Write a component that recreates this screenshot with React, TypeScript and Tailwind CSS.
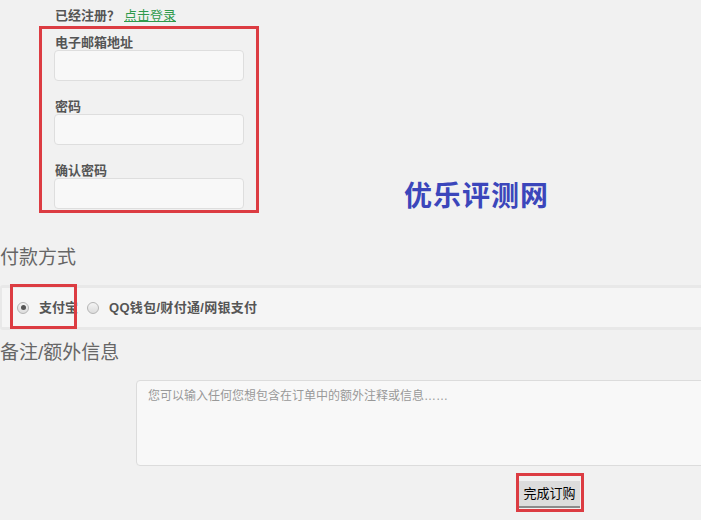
import React from 'react';

const font = "font-['Liberation_Sans','Noto_Sans_CJK_SC',sans-serif]";

function Field({ label, first }: { label: string; first?: boolean }) {
  return (
    <div className={first ? '' : 'mt-[19px]'}>
      <div className="pl-[1px] text-[13px] font-bold leading-[14px] text-[#555]">{label}</div>
      <div className="h-[31px] w-[190px] rounded-[4px] border border-[#dedede] bg-[#f8f8f8]" />
    </div>
  );
}

function Radio({ checked }: { checked?: boolean }) {
  return (
    <span className="flex h-[12px] w-[12px] items-center justify-center rounded-full border border-[#b5b5b5] bg-gradient-to-b from-[#f4f4f4] to-[#dcdcdc]">
      {checked && <span className="h-[5px] w-[5px] rounded-full bg-[#555]" />}
    </span>
  );
}

export default function App() {
  return (
    <div className={`relative h-[520px] w-[701px] overflow-hidden bg-[#f1f1f1] ${font}`}>
      <div className="flex h-[24px] items-start pl-[55px] pt-[8px] text-[13px] leading-[16px] text-[#555]">
        <span className="font-bold">已经注册？</span>
        <a href="#" className="ml-[4px] text-[#2f9a4c] underline">点击登录</a>
      </div>

      <div className="ml-[39px] mt-[2px] w-[220px] border-[3px] border-[#dc3c42] pb-[1px] pl-[12px] pt-[7px]">
        <Field label="电子邮箱地址" first />
        <Field label="密码" />
        <Field label="确认密码" />
      </div>

      <div className="absolute left-[404px] top-[179px] text-[28px] font-bold leading-[36px] tracking-[1px] text-[#3b46bb]">
        优乐评测网
      </div>

      <h3 className="mt-[31px] text-[19px] leading-[28px] text-[#666]">付款方式</h3>

      <div className="relative mt-[13px] flex h-[45px] items-center rounded-l-[3px] border-y-[3px] border-l-[2px] border-[#e8e8e8] bg-[#f5f5f5] pl-[15px] text-[13px] font-bold text-[#555]">
        <Radio checked />
        <span className="ml-[10px]">支付宝</span>
        <span className="ml-[9px]"><Radio /></span>
        <span className="ml-[10px] tracking-[0.3px]">QQ钱包/财付通/网银支付</span>
        <div className="absolute left-[8px] top-[-4px] h-[45px] w-[67px] border-[3px] border-[#dc3c42]" />
      </div>

      <h3 className="mt-[9px] text-[19px] leading-[28px] text-[#666]">备注/额外信息</h3>

      <div className="ml-[136px] mt-[13px] h-[86px] w-[600px] rounded-[4px] border border-[#dcdcdc] bg-[#f8f8f8] pl-[11px] pt-[6px] text-[12px] leading-[18px] text-[#999]">
        您可以输入任何您想包含在订单中的额外注释或信息……
      </div>

      <div className="ml-[516px] mt-[7px] h-[39px] w-[68px] border-[3px] border-[#dc3c42] pt-[5px]">
        <button className="block h-[27px] w-[61px] border-b-2 border-[#8a8a8a] bg-[#dcdcdc] text-[13px] leading-[24px] text-black">
          完成订购
        </button>
      </div>
    </div>
  );
}
